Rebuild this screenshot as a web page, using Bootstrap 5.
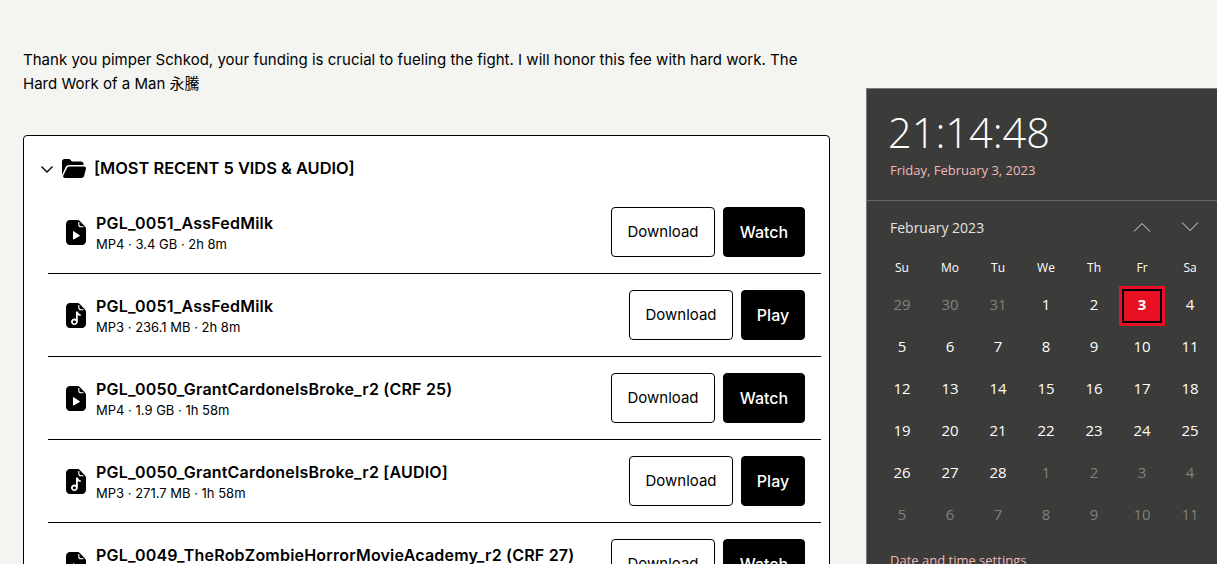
<!DOCTYPE html>
<html lang="en">
<head>
    <meta charset="UTF-8">
    <meta name="viewport" content="width=device-width, initial-scale=1.0">
    <title>Vault</title>
    <link href="https://cdn.jsdelivr.net/npm/bootstrap@5.3.0/dist/css/bootstrap.min.css" rel="stylesheet">
    <style>
        html, body { height: 100%; overflow: hidden; }
        body {
            background-color: #f4f4f0;
            color: #000;
            font-family: Inter, "Noto Sans CJK SC", sans-serif;
            position: relative;
        }
        .page-wrap { width: 807px; margin-left: 23px; padding-top: 48px; }
        .intro { font-size: 15px; line-height: 24px; margin-bottom: 39px; letter-spacing: .02px; }
        .vault-card { border: 1px solid #000; border-radius: 4px; background: #fff; padding: 0 8px 0 0; }
        .vault-head { height: 55px; padding: 10px 0 0 16px; gap: 8px; font-size: 16.4px; font-weight: 600; }
        .vault-rows { margin-left: 24px; }
        .vault-row { height: 83px; border-bottom: 1px solid #000; padding: 0 16px 0 18px; }
        .file-text { margin-left: 10px; padding-top: 4px; }
        .file-name { font-size: 16px; font-weight: 600; line-height: 21px; letter-spacing: .2px; }
        .file-meta { font-size: 13px; line-height: 21px; }
        .dl-btn, .go-btn { height: 50px; border-radius: 4px; font-size: 15px; display: flex; align-items: center; justify-content: center; padding: 0; }
        .dl-btn { width: 104px; background: #fff; border: 1px solid #000; color: #000; padding-top: 1px; }
        .go-btn { background: #000; border: 1px solid #000; color: #fff; font-size: 16px; font-weight: 500; }
        .go-watch { width: 82px; }
        .go-play { width: 64px; }
        .clock-panel {
            position: absolute; left: 866px; top: 88px; width: 351px; height: 476px;
            background: #3b3b39; color: #fff; border: 1px solid #7a7a78; border-right: 0; border-bottom: 0;
            font-family: "Open Sans", "Noto Sans", sans-serif; overflow: hidden;
        }
        .clock-top { height: 112px; border-bottom: 1px solid #676765; padding: 15px 0 0 21px; }
        .clock-time { font-size: 41.500px; font-weight: 300; line-height: 56px; }
        .clock-date { font-size: 13px; line-height: 20px; color: #f2b8bd; padding-left: 2px; }
        .month-bar { height: 52px; padding: 0 18px 0 23px; font-size: 14px; color: #e4e4e4; }
        .month-arrows { gap: 30px; }
        .cal-grid { display: grid; grid-template-columns: repeat(7, 48px); padding: 3px 0 0 11px; }
        .cal-day { height: 24px; margin-bottom: 3px; font-size: 12px; display: flex; align-items: center; justify-content: center; }
        .cal-cell { height: 42px; font-size: 15px; display: flex; align-items: center; justify-content: center; }
        .cal-off { color: #80807e; }
        .cal-today { position: relative; font-weight: 700; }
        .cal-today::before {
            content: ""; position: absolute; left: 1px; top: 3px; width: 46px; height: 40px;
            background: #e81123; border: 3px solid #e81123; outline: 2px solid #000; outline-offset: -5px;
        }
        .cal-today span { position: relative; }
        .clock-link { font-size: 13px; color: #f2b8bd; padding: 16px 0 0 23px; }
    </style>
</head>
<body>
    <div class="page-wrap">
        <p class="intro">Thank you pimper Schkod, your funding is crucial to fueling the fight. I will honor this fee with hard work. The Hard Work of a Man 永騰</p>
        <div class="card vault-card">
            <div class="d-flex align-items-center vault-head">
                <svg width="14" height="14" viewBox="0 0 14 14" fill="none" stroke="#000" stroke-width="1.4"><path d="M1.5 4.500 7 10l5.500-5.500"/></svg>
                <svg width="24" height="19" viewBox="0 0 24 19"><path d="M0 2.500C0 1.100 1.100 0 2.500 0h5l2.500 2.500h9c1.400 0 2.500 1.100 2.500 2.500v1H7C5.300 6 4 7 3.400 8.500L0 16z"/><path d="M7.300 7.500H22c1.300 0 2.200 1.100 1.900 2.300l-1.700 7c-.3 1.300-1.400 2.200-2.700 2.200H3c-1.400 0-2.200-1.200-1.700-2.400L5 9c.4-1 1.300-1.500 2.300-1.500z"/></svg>
                <span>[MOST RECENT 5 VIDS &amp; AUDIO]</span>
            </div>
            <div class="vault-rows" id="rows"></div>
        </div>
    </div>

    <div class="clock-panel">
        <div class="clock-top">
            <div class="clock-time">21:14:48</div>
            <div class="clock-date">Friday, February 3, 2023</div>
        </div>
        <div class="d-flex align-items-center justify-content-between month-bar">
            <span>February 2023</span>
            <div class="d-flex month-arrows">
                <svg width="18" height="12" viewBox="0 0 18 12" fill="none" stroke="#ddd" stroke-width="1"><path d="M1 10.500 9 2.500l8 8"/></svg>
                <svg width="18" height="12" viewBox="0 0 18 12" fill="none" stroke="#ddd" stroke-width="1"><path d="M1 1.500l8 8 8-8"/></svg>
            </div>
        </div>
        <div class="cal-grid" id="cal"></div>
        <div class="clock-link">Date and time settings</div>
    </div>

    <script>
        const fileBody = `<path d="M4 0h7.500c.9 0 1.700.3 2.300 1l5 5.300c.8.700 1.200 1.600 1.200 2.500V21c0 2.200-1.800 4-4 4H4c-2.200 0-4-1.800-4-4V4c0-2.200 1.800-4 4-4z"/><path d="M12.800 2v2.500c0 1.300 1 2.300 2.300 2.300h2.400" fill="none" stroke="#fff" stroke-width="1.100"/>`;
        const videoIcon = `<svg width="20" height="25" viewBox="0 0 20 25">${fileBody}<path fill="#fff" d="M7 11.500v7.500c0 .4.400.6.700.4l6-3.400c.3-.2.300-.6 0-.8l-6-3.900c-.3-.2-.7 0-.7.200z"/></svg>`;
        const audioIcon = `<svg width="20" height="25" viewBox="0 0 20 25">${fileBody}<path fill="#fff" fill-rule="evenodd" d="M10 8.500h1.800c.2 1.500 1.300 2.500 2.900 2.700v1.800c-1.100 0-2.100-.4-2.900-1v6.800c0 1.900-1.600 3.200-3.400 3.200-1.900 0-3.400-1.400-3.400-3.200s1.500-3.200 3.400-3.200c.6 0 1.100.1 1.600.4zM8.400 17.600c-.9 0-1.600.6-1.600 1.400s.7 1.400 1.600 1.400S10 19.800 10 19s-.7-1.400-1.600-1.400z"/></svg>`;
        const files = [
            ["PGL_0051_AssFedMilk", "MP4 · 3.4 GB · 2h 8m", "Watch"],
            ["PGL_0051_AssFedMilk", "MP3 · 236.1 MB · 2h 8m", "Play"],
            ["PGL_0050_GrantCardoneIsBroke_r2 (CRF 25)", "MP4 · 1.9 GB · 1h 58m", "Watch"],
            ["PGL_0050_GrantCardoneIsBroke_r2 [AUDIO]", "MP3 · 271.7 MB · 1h 58m", "Play"],
            ["PGL_0049_TheRobZombieHorrorMovieAcademy_r2 (CRF 27)", "MP4 · 2.2 GB · 1h 40m", "Watch"]
        ];
        document.getElementById("rows").innerHTML = files.map(f => `
            <div class="d-flex align-items-center vault-row">
                ${f[2] === "Watch" ? videoIcon : audioIcon}
                <div class="flex-grow-1 file-text">
                    <div class="file-name">${f[0]}</div>
                    <div class="file-meta">${f[1]}</div>
                </div>
                <div class="d-flex gap-2">
                    <button class="btn dl-btn">Download</button>
                    <button class="btn go-btn ${f[2] === "Watch" ? "go-watch" : "go-play"}">${f[2]}</button>
                </div>
            </div>`).join("");

        const days = ["Su","Mo","Tu","We","Th","Fr","Sa"].map(d => `<div class="cal-day">${d}</div>`);
        const cells = [];
        [29,30,31].forEach(d => cells.push([d, true]));
        for (let d = 1; d <= 28; d++) cells.push([d, false]);
        for (let d = 1; d <= 11; d++) cells.push([d, true]);
        document.getElementById("cal").innerHTML = days.join("") + cells.map(c => {
            const today = c[0] === 3 && !c[1];
            return `<div class="cal-cell ${c[1] ? "cal-off" : ""} ${today ? "cal-today" : ""}"><span>${c[0]}</span></div>`;
        }).join("");
    </script>
    <script src="https://cdn.jsdelivr.net/npm/bootstrap@5.3.0/dist/js/bootstrap.bundle.min.js"></script>
</body>
</html>
